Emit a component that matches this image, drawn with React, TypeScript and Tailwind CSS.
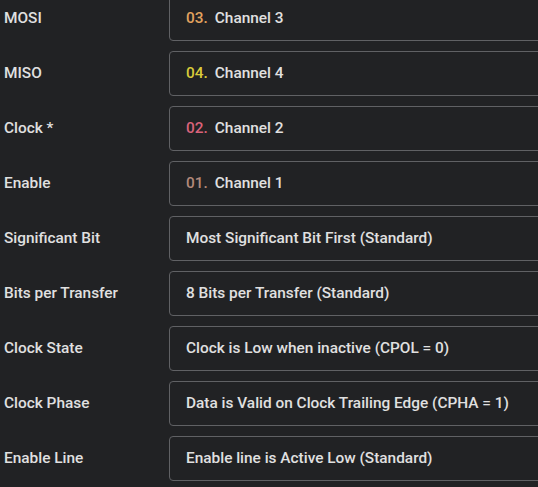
import React from "react";

type Row = { label: string; num?: string; numColor?: string; text: string };

const rows: Row[] = [
  { label: "MOSI", num: "03.", numColor: "text-[#e2a25f]", text: "Channel 3" },
  { label: "MISO", num: "04.", numColor: "text-[#d9cb3a]", text: "Channel 4" },
  { label: "Clock *", num: "02.", numColor: "text-[#d9627a]", text: "Channel 2" },
  { label: "Enable", num: "01.", numColor: "text-[#b3897a]", text: "Channel 1" },
  { label: "Significant Bit", text: "Most Significant Bit First (Standard)" },
  { label: "Bits per Transfer", text: "8 Bits per Transfer (Standard)" },
  { label: "Clock State", text: "Clock is Low when inactive (CPOL = 0)" },
  { label: "Clock Phase", text: "Data is Valid on Clock Trailing Edge (CPHA = 1)" },
  { label: "Enable Line", text: "Enable line is Active Low (Standard)" },
];

export default function App() {
  return (
    <div
      className="w-[538px] h-[487px] overflow-hidden bg-[#212224] text-[#e0e0e0] text-[15.4px] font-medium"
      style={{ fontFamily: "Roboto, 'Liberation Sans', sans-serif" }}
    >
      <div className="flex flex-col gap-[10px] mt-[-4px]">
        {rows.map((r) => (
          <div key={r.label} className="flex items-center h-[45px]">
            <div className="w-[169px] shrink-0 pl-[4px] pt-[1px]">{r.label}</div>
            <div className="flex items-center h-[45px] w-[420px] shrink-0 border border-[#606164] rounded-[4px] pl-[16px] pt-[1px]">
              {r.num && <span className={`${r.numColor} mr-[7px]`}>{r.num}</span>}
              <span>{r.text}</span>
            </div>
          </div>
        ))}
      </div>
    </div>
  );
}
